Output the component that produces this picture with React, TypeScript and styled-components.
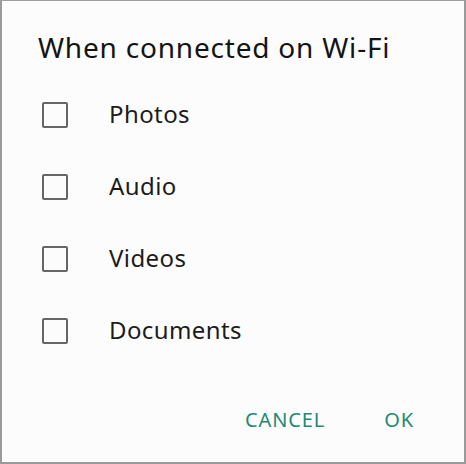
import React from "react";
import styled, { createGlobalStyle } from "styled-components";

const Global = createGlobalStyle`
  html, body { margin: 0; padding: 0; background: #fcfcfc; }
  * { box-sizing: border-box; }
`;

const Dialog = styled.div`
  width: 466px;
  height: 464px;
  background: #fcfcfc;
  border-top: 1px solid #a0a0a0;
  border-left: 2px solid #9a9a9a;
  border-right: 2px solid #9a9a9a;
  border-bottom: 2px solid #9a9a9a;
  display: flex;
  flex-direction: column;
  padding-top: 27px;
  font-family: "Noto Sans", "Open Sans", sans-serif;
`;

const Title = styled.h1`
  margin: 0 0 13px 36px;
  height: 38px;
  line-height: 38px;
  font-size: 28px;
  font-weight: 400;
  color: #141414;
  letter-spacing: 0.8px;
  white-space: nowrap;
`;

const List = styled.div`
  display: flex;
  flex-direction: column;
`;

const Row = styled.label`
  display: flex;
  align-items: center;
  height: 72px;
  padding-left: 40px;
  gap: 41px;
  cursor: pointer;
`;

const Box = styled.span<{ $checked?: boolean }>`
  width: 26px;
  height: 26px;
  border: 2.5px solid #666;
  border-radius: 2px;
  flex-shrink: 0;
  background: ${(p) => (p.$checked ? "#1a8a72" : "transparent")};
`;

const Label = styled.span`
  font-size: 24px;
  line-height: 30px;
  padding-bottom: 2px;
  color: #1c1c1c;
  letter-spacing: 0.4px;
`;

const Actions = styled.div`
  display: flex;
  justify-content: flex-end;
  align-items: center;
  gap: 43px;
  margin-top: 31px;
  padding-right: 42px;
`;

const Button = styled.button`
  background: none;
  border: none;
  padding: 8px 8px;
  font-family: inherit;
  font-size: 20px;
  color: #1e8a73;
  letter-spacing: 0.9px;
  cursor: pointer;
`;

const items = ["Photos", "Audio", "Videos", "Documents"];

export default function App() {
  return (
    <>
      <Global />
      <Dialog>
        <Title>When connected on Wi-Fi</Title>
        <List>
          {items.map((it) => (
            <Row key={it}>
              <Box />
              <Label>{it}</Label>
            </Row>
          ))}
        </List>
        <Actions>
          <Button>CANCEL</Button>
          <Button>OK</Button>
        </Actions>
      </Dialog>
    </>
  );
}
